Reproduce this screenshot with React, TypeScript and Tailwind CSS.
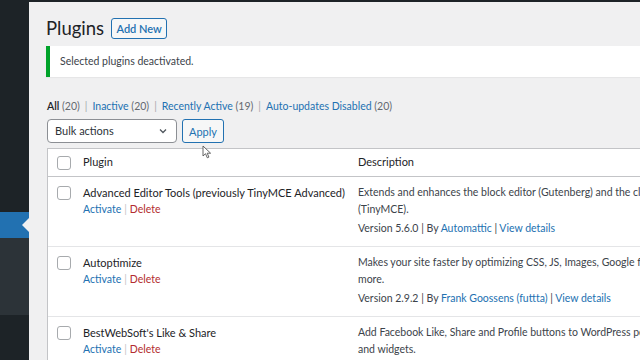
import React from 'react';

const font = { fontFamily: 'Lato, "Noto Sans", sans-serif' };

const plugins = [
  {
    name: 'Advanced Editor Tools (previously TinyMCE Advanced)',
    desc: ['Extends and enhances the block editor (Gutenberg) and the classic editor', '(TinyMCE).'],
    version: '5.6.0',
    author: 'Automattic',
  },
  {
    name: 'Autoptimize',
    desc: ['Makes your site faster by optimizing CSS, JS, Images, Google fonts and', 'more.'],
    version: '2.9.2',
    author: 'Frank Goossens (futtta)',
  },
  {
    name: "BestWebSoft's Like & Share",
    desc: ['Add Facebook Like, Share and Profile buttons to WordPress posts, pages', 'and widgets.'],
    version: '2.65',
    author: 'BestWebSoft',
  },
];

const Checkbox = () => (
  <span className="block w-[14px] h-[14px] rounded-[3px] border border-[#a7aaad] bg-white" />
);

const Sidebar = () => (
  <div className="w-[29px] shrink-0 flex flex-col bg-[#1d2327]">
    <div className="h-[210px]" />
    <div className="relative h-[26px] bg-[#2271b1]">
      {/* current menu arrow */}
      <span className="absolute right-0 top-[6px] w-0 h-0 border-y-[7px] border-y-transparent border-r-[7px] border-r-[#f0f0f1]" />
    </div>
    <div className="h-[77px] bg-[#2c3338]" />
    <div className="flex-1" />
  </div>
);

const Sep = () => <span className="text-[#a7aaad] px-[5px]">|</span>;

export default function App() {
  return (
    <div className="w-[640px] h-[360px] overflow-hidden flex flex-col bg-[#1d2327] text-[10.5px] text-[#3c434a]" style={font}>
      <div className="h-[2px] shrink-0 bg-[#1d2327]" />
      <div className="flex flex-1 min-h-0">
        <Sidebar />
        <div className="relative flex-1 min-w-0 overflow-hidden bg-[#f0f0f1] pl-[17px] pt-[16px]">
          <div className="w-[760px]">
            {/* Heading */}
            <div className="flex items-center gap-[7px] h-[21px]">
              <h1 className="text-[18.5px] leading-[21px] text-[#1d2327]">Plugins</h1>
              <button className="h-[21px] w-[56px] rounded-[3px] border border-[#2271b1] bg-[#f6f7f7] text-[#2271b1] text-[11px] font-semibold leading-none">
                Add New
              </button>
            </div>

            {/* Notice */}
            <div className="mt-[7px] h-[31px] flex items-center bg-white border-l-[4px] border-[#00a32a] pl-[10px] shadow-[0_1px_1px_rgba(0,0,0,0.04)]">
              <p className="text-[#3c434a]">Selected plugins deactivated.</p>
            </div>

            {/* Views */}
            <div className="mt-[21px] flex items-center leading-[17px] pl-[1px] text-[#646970] whitespace-pre">
              <span><b className="font-semibold text-[#1d2327]">All</b> (20)</span>
              <Sep />
              <span><span className="text-[#2271b1]">Inactive</span> (20)</span>
              <Sep />
              <span><span className="text-[#2271b1]">Recently Active</span> (19)</span>
              <Sep />
              <span><span className="text-[#2271b1]">Auto-updates Disabled</span> (20)</span>
            </div>

            {/* Bulk actions */}
            <div className="mt-[4px] flex items-center gap-[5px] pl-[1px]">
              <div className="w-[130px] h-[24px] flex items-center justify-between rounded-[4px] border border-[#8c8f94] bg-white pl-[7px] pr-[8px] text-[11px] text-[#2c3338]">
                <span>Bulk actions</span>
                <svg width="10" height="10" viewBox="0 0 20 20" fill="none" stroke="#50575e" strokeWidth="2.6">
                  <path d="M4 7l6 6 6-6" />
                </svg>
              </div>
              <button className="h-[24px] w-[42px] rounded-[3px] border border-[#2271b1] bg-[#f6f7f7] text-[11px] text-[#2271b1] leading-none">
                Apply
              </button>
            </div>

            {/* Table */}
            <div className="mt-[5px] ml-[1px] border border-[#c3c4c7] bg-white">
              <div className="flex items-center h-[28px] border-b border-[#c3c4c7] text-[11px]">
                <div className="w-[25px] flex justify-end pr-[2px] shrink-0"><Checkbox /></div>
                <div className="w-[285px] shrink-0 pl-[10px] text-[#1d2327]">Plugin</div>
                <div className="flex-1 text-[#1d2327]">Description</div>
              </div>
              {plugins.map((p) => (
                <div key={p.name} className="flex h-[70px] border-b border-[#e4e5e7] pt-[7px]">
                  <div className="w-[25px] flex justify-end pr-[2px] pt-[2px] shrink-0">
                    <div><Checkbox /></div>
                  </div>
                  <div className="w-[285px] shrink-0 pl-[10px] leading-[17px]">
                    <div className="text-[11px] text-[#1d2327] whitespace-nowrap">{p.name}</div>
                    <div>
                      <span className="text-[#2271b1]">Activate</span>
                      <span className="text-[#c3c4c7] px-[3px]">|</span>
                      <span className="text-[#b32d2e]">Delete</span>
                    </div>
                  </div>
                  <div className="flex-1 leading-[17px] whitespace-nowrap">
                    {p.desc.map((l) => (
                      <div key={l}>{l}</div>
                    ))}
                    <div className="mt-[2px]">
                      Version {p.version} | By <span className="text-[#2271b1]">{p.author}</span> | <span className="text-[#2271b1]">View details</span>
                    </div>
                  </div>
                </div>
              ))}
            </div>
          </div>

          {/* mouse cursor */}
          <svg className="absolute left-[173px] top-[143px]" width="10" height="14" viewBox="0 0 10 14">
            <path d="M1 1 L1 11 L3.5 8.7 L5.3 12.8 L6.9 12.1 L5.2 8.2 L8.6 8.2 Z" fill="#fff" stroke="#555" strokeWidth="0.9" strokeLinejoin="round" />
          </svg>
        </div>
      </div>
    </div>
  );
}
